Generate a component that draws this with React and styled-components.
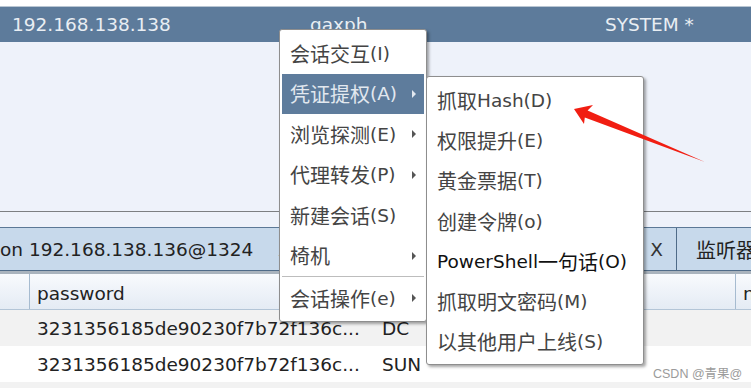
import React from "react";
import styled, { createGlobalStyle } from "styled-components";

const GlobalStyle = createGlobalStyle`
  html, body {
    margin: 0;
    padding: 0;
    background: #fff;
  }
  body {
    font-family: "DejaVu Sans", "Noto Sans CJK SC", sans-serif;
    font-size: 18.5px;
  }
`;

const Screen = styled.div`
  position: relative;
  width: 751px;
  height: 388px;
  overflow: hidden;
  background: #eef2fa;
  color: #222;
`;

const TopStrip = styled.div`
  height: 6px;
  background: #fff;
  border-bottom: 1px solid #b9c6d3;
`;

const SessionBar = styled.div`
  display: grid;
  grid-template-columns: 298px 295px 1fr;
  align-items: center;
  height: 35px;
  padding-left: 12px;
  background: #5d7b9b;
  color: #e9eef3;
  white-space: nowrap;
`;

const EmptyArea = styled.div`
  height: 169px;
  border-bottom: 1px solid #7d7f82;
`;

const Gap = styled.div`
  height: 15px;
`;

const TabBar = styled.div`
  display: flex;
  height: 42px;
  border-top: 1px solid #5b7896;
  border-bottom: 1px solid #4f6b88;
  background: #c7d9eb;
`;

const Tab = styled.div`
  box-sizing: border-box;
  display: flex;
  align-items: center;
  justify-content: space-between;
  width: ${(p) => (p.$width ? `${p.$width}px` : "auto")};
  flex: ${(p) => (p.$width ? "none" : "1")};
  padding: 0 13px 0 ${(p) => p.$pad || 0}px;
  border-right: ${(p) => (p.$width ? "1px solid #4f6b88" : "none")};
  white-space: nowrap;
  color: #222;
`;

const Close = styled.span`
  color: #333;
`;

const Table = styled.div`
  border-top: 3px solid #a9b3bd;
`;

const Row = styled.div`
  display: grid;
  grid-template-columns: 29px 345px 361px 1fr;
  height: ${(p) => (p.$header ? 35 : 36)}px;
  background: ${(p) => p.$bg};
  border-bottom: ${(p) => (p.$header ? "1px solid #b3c5d7" : "none")};
`;

const Cell = styled.div`
  display: flex;
  align-items: center;
  padding-left: ${(p) => (p.$header ? 7 : 8)}px;
  padding-top: ${(p) => (p.$header ? 3 : 0)}px;
  border-left: ${(p) => (p.$header && p.$line ? "1px solid #a6bbd0" : "none")};
  white-space: nowrap;
  overflow: hidden;
  color: #222;
`;

const HeaderRow = styled(Row)`
  background: linear-gradient(#f8fafd, #e4ebf4);
`;

const Menu = styled.div`
  position: absolute;
  left: ${(p) => p.$left}px;
  top: ${(p) => p.$top}px;
  width: ${(p) => p.$width}px;
  box-sizing: border-box;
  padding: 3px 2px 2px;
  background: #fff;
  border: 1px solid #8e8e8e;
  border-radius: 3px;
  box-shadow: 2px 2px 3px rgba(0, 0, 0, 0.35);
`;

const Item = styled.div`
  position: relative;
  display: flex;
  align-items: center;
  height: ${(p) => p.$h}px;
  padding-left: 8px;
  white-space: nowrap;
  background: ${(p) => (p.$active ? "#5e7c9c" : "transparent")};
  color: ${(p) => (p.$active ? "#e2e8ef" : p.$strong ? "#111" : "#444")};

  ${(p) =>
    p.$sub &&
    `
    &::after {
      content: "";
      position: absolute;
      right: 8px;
      top: 50%;
      margin-top: -4px;
      border-left: 4px solid ${p.$active ? "#e2e8ef" : "#555"};
      border-top: 4px solid transparent;
      border-bottom: 4px solid transparent;
    }
  `}
`;

const Separator = styled.div`
  height: 1px;
  margin: 0 0 1px;
  background: #bdbdbd;
  box-shadow: 0 1px 0 #fff;
`;

const Han = styled.span`
  font-size: 20px;
`;

const Watermark = styled.div`
  position: absolute;
  left: 653px;
  top: 363px;
  font-family: "Liberation Sans", "Noto Sans CJK SC", sans-serif;
  font-size: 12.5px;
  color: #9b9b9b;
  white-space: nowrap;
`;

const ArrowLayer = styled.svg`
  position: absolute;
  left: 0;
  top: 0;
  pointer-events: none;
`;

// CJK runs are a touch wider in the original than the DejaVu text around them
const mixed = (text) =>
  text
    .split(/([\u4e00-\u9fff]+)/)
    .map((part, i) => (/[\u4e00-\u9fff]/.test(part) ? <Han key={i}>{part}</Han> : part));

const mainMenu = [
  { label: "会话交互(I)" },
  { label: "凭证提权(A)", sub: true, active: true },
  { label: "浏览探测(E)", sub: true },
  { label: "代理转发(P)", sub: true },
  { label: "新建会话(S)" },
  { label: "椅机", sub: true },
  { sep: true },
  { label: "会话操作(e)", sub: true },
];

const credMenu = [
  { label: "抓取Hash(D)" },
  { label: "权限提升(E)" },
  { label: "黄金票据(T)" },
  { label: "创建令牌(o)" },
  { label: "PowerShell一句话(O)", strong: true },
  { label: "抓取明文密码(M)" },
  { label: "以其他用户上线(S)" },
];

const rows = [
  { password: "3231356185de90230f7b72f136c...", realm: "DC", bg: "#f2f2f2" },
  { password: "3231356185de90230f7b72f136c...", realm: "SUN", bg: "#ffffff" },
  { password: "", realm: "", bg: "#f2f2f2" },
];

export default function App() {
  return (
    <Screen>
      <GlobalStyle />
      <TopStrip />
      <SessionBar>
        <span>192.168.138.138</span>
        <span>gaxph</span>
        <span>SYSTEM *</span>
      </SessionBar>
      <EmptyArea />
      <Gap />

      <TabBar>
        <Tab $width={305}>
          <span>on 192.168.138.136@1324</span>
          <Close>X</Close>
        </Tab>
        <Tab $width={372} $pad={25}>
          <span>Beacon 192.168.138.136@1828</span>
          <Close>X</Close>
        </Tab>
        <Tab $pad={19}>{mixed("监听器")}</Tab>
      </TabBar>

      <Table>
        <HeaderRow $header>
          <Cell $header />
          <Cell $header $line>password</Cell>
          <Cell $header $line>realm</Cell>
          <Cell $header $line>note</Cell>
        </HeaderRow>
        {rows.map((r, i) => (
          <Row key={i} $bg={r.bg}>
            <Cell />
            <Cell>{r.password}</Cell>
            <Cell>{r.realm}</Cell>
            <Cell />
          </Row>
        ))}
      </Table>

      <Menu $left={279} $top={29} $width={148}>
        {mainMenu.map((m, i) =>
          m.sep ? (
            <Separator key={i} />
          ) : (
            <Item key={i} $h={40.5} $sub={m.sub} $active={m.active}>
              {mixed(m.label)}
            </Item>
          )
        )}
      </Menu>

      <Menu $left={426} $top={76} $width={218}>
        {credMenu.map((m, i) => (
          <Item key={i} $h={40.3} $strong={m.strong}>
            {mixed(m.label)}
          </Item>
        ))}
      </Menu>

      <Watermark>CSDN @青果@</Watermark>

      <ArrowLayer width="751" height="388" viewBox="0 0 751 388">
        <polygon
          points="574,109 593,105 587.6,110.6 705,162 584.8,117.6 584,124"
          fill="#f11e12"
        />
      </ArrowLayer>
    </Screen>
  );
}
